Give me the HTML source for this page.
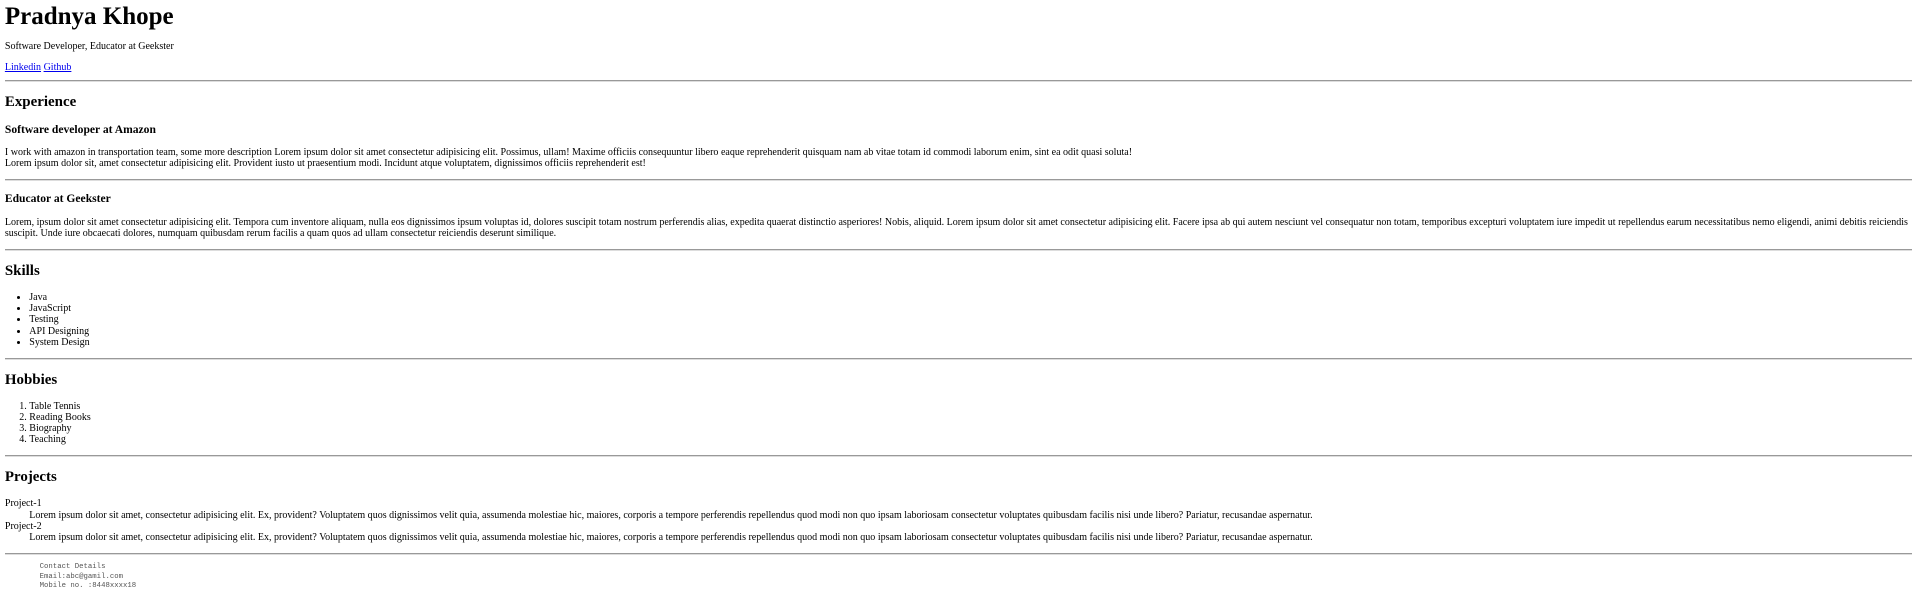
<!DOCTYPE html>
<html><head><meta charset="utf-8"><style>
html{zoom:0.61}
body{margin:8px;font-family:"Liberation Serif",serif;font-size:16.45px;line-height:18.35px;color:#000;background:#fff}
h1{margin-top:0;font-size:41px;line-height:40px;margin-bottom:19px}
h2{font-size:24.5px;line-height:27.8px;margin:19.8px 0}
h3{font-size:19px;line-height:21.7px;margin:18.5px 0}
p{margin:15.8px 0}
p.links{margin-bottom:11px}
ul,ol{margin:16px 0}
dl{margin:16px 0}
hr{border:none;border-top:1px solid #999;border-bottom:1px solid #ddd;margin:8px 0}
pre{font-family:"Liberation Mono",monospace;font-size:12px;line-height:15px;color:#555;margin:14px 0;padding-left:57px}
a{color:#00e}
</style></head><body>
<h1>Pradnya Khope</h1>
<p>Software Developer, Educator at Geekster</p>
<p class="links"><a href="#">Linkedin</a> <a href="#">Github</a></p>
<hr>
<h2>Experience</h2>
<h3>Software developer at Amazon</h3>
<p>I work with amazon in transportation team, some more description Lorem ipsum dolor sit amet consectetur adipisicing elit. Possimus, ullam! Maxime officiis consequuntur libero eaque reprehenderit quisquam nam ab vitae totam id commodi laborum enim, sint ea odit quasi soluta!<br>Lorem ipsum dolor sit, amet consectetur adipisicing elit. Provident iusto ut praesentium modi. Incidunt atque voluptatem, dignissimos officiis reprehenderit est!</p>
<hr>
<h3>Educator at Geekster</h3>
<p>Lorem, ipsum dolor sit amet consectetur adipisicing elit. Tempora cum inventore aliquam, nulla eos dignissimos ipsum voluptas id, dolores suscipit totam nostrum perferendis alias, expedita quaerat distinctio asperiores! Nobis, aliquid. Lorem ipsum dolor sit amet consectetur adipisicing elit. Facere ipsa ab qui autem nesciunt vel consequatur non totam, temporibus excepturi voluptatem iure impedit ut repellendus earum necessitatibus nemo eligendi, animi debitis reiciendis suscipit. Unde iure obcaecati dolores, numquam quibusdam rerum facilis a quam quos ad ullam consectetur reiciendis deserunt similique.</p>
<hr>
<h2>Skills</h2>
<ul><li>Java</li><li>JavaScript</li><li>Testing</li><li>API Designing</li><li>System Design</li></ul>
<hr>
<h2>Hobbies</h2>
<ol><li>Table Tennis</li><li>Reading Books</li><li>Biography</li><li>Teaching</li></ol>
<hr>
<h2>Projects</h2>
<dl>
<dt>Project-1</dt>
<dd>Lorem ipsum dolor sit amet, consectetur adipisicing elit. Ex, provident? Voluptatem quos dignissimos velit quia, assumenda molestiae hic, maiores, corporis a tempore perferendis repellendus quod modi non quo ipsam laboriosam consectetur voluptates quibusdam facilis nisi unde libero? Pariatur, recusandae aspernatur.</dd>
<dt>Project-2</dt>
<dd>Lorem ipsum dolor sit amet, consectetur adipisicing elit. Ex, provident? Voluptatem quos dignissimos velit quia, assumenda molestiae hic, maiores, corporis a tempore perferendis repellendus quod modi non quo ipsam laboriosam consectetur voluptates quibusdam facilis nisi unde libero? Pariatur, recusandae aspernatur.</dd>
</dl>
<hr>
<pre>Contact Details
Email:abc@gamil.com
Mobile no. :8448xxxx18</pre>
</body></html>
